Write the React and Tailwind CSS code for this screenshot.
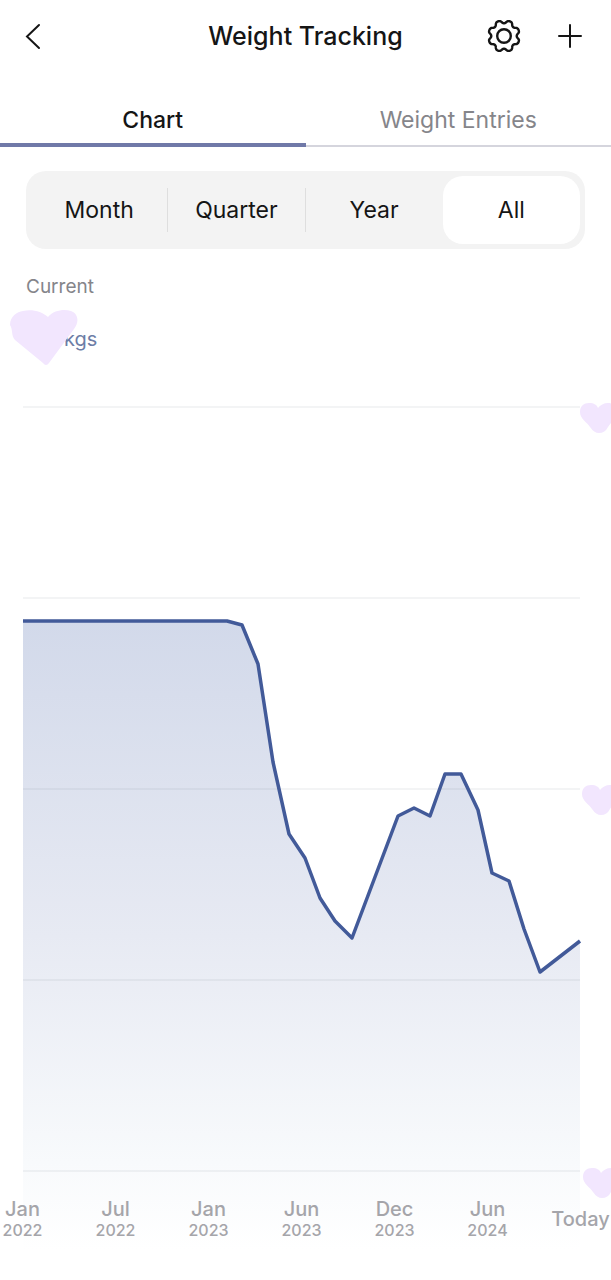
import React, { useState } from 'react';

const tabs = ['Chart', 'Weight Entries'];

const ranges = ['Month', 'Quarter', 'Year', 'All'];

const gridLines = [27, 218, 409, 600, 791];

const points = [
  [23, 241], [227, 241], [242, 245], [258, 284], [273, 382], [289, 454],
  [305, 478], [320, 518], [335, 541], [352, 558], [398, 436], [414, 428],
  [430, 436], [445, 394], [461, 394], [478, 430], [492, 493], [509, 501],
  [524, 549], [540, 592], [580, 561],
];

const hearts = [
  { x: 580, y: 22 },
  { x: 582, y: 404 },
  { x: 583, y: 787 },
];

const xLabels = [
  { top: 'Jan', bottom: '2022' },
  { top: 'Jul', bottom: '2022' },
  { top: 'Jan', bottom: '2023' },
  { top: 'Jun', bottom: '2023' },
  { top: 'Dec', bottom: '2023' },
  { top: 'Jun', bottom: '2024' },
  { top: 'Today' },
];

const linePath = 'M' + points.map((p) => p.join(' ')).join('L');
const areaPath = `${linePath}L580 870L23 870Z`;

// Eight rounded teeth, with a notch at twelve o'clock
const gearPath =
  'M' +
  Array.from({ length: 144 }, (_, i) => {
    const a = (i / 144) * Math.PI * 2;
    const wave = Math.cos(8 * a + Math.PI);
    const r = 14.1 + 1.8 * Math.tanh(1.3 * wave + 0.3);
    return `${(18 + r * Math.cos(a)).toFixed(2)} ${(18 + r * Math.sin(a)).toFixed(2)}`;
  }).join('L') +
  'Z';

const GearIcon = () => (
  <svg
    viewBox="0 0 36 36"
    className="w-9 h-9"
    fill="none"
    stroke="currentColor"
    strokeWidth="2.4"
    strokeLinejoin="round"
  >
    <path d={gearPath} />
    <circle cx="18" cy="18" r="6.8" />
  </svg>
);

const Header = () => (
  <header className="h-18 px-6 grid grid-cols-[1fr_auto_1fr] items-center">
    <button aria-label="Back" className="w-5 h-9 flex items-center">
      <svg
        viewBox="0 0 20 28"
        className="w-5 h-7"
        fill="none"
        stroke="currentColor"
        strokeWidth="2"
        strokeLinecap="round"
      >
        <path d="M15 3L3 14.5L15 26" />
      </svg>
    </button>
    <h1 className="text-[25px] leading-8 font-medium">Weight Tracking</h1>
    <div className="flex items-center justify-end gap-[35px]">
      <button aria-label="Settings">
        <GearIcon />
      </button>
      <button aria-label="Add entry" className="mr-1">
        <svg
          viewBox="0 0 26 26"
          className="w-6.5 h-6.5"
          fill="none"
          stroke="currentColor"
          strokeWidth="2"
          strokeLinecap="round"
        >
          <path d="M13 2V24M2 13H24" />
        </svg>
      </button>
    </div>
  </header>
);

const WeightChart = () => (
  <section className="grid overflow-hidden" aria-label="Weight history">
    <svg viewBox="0 0 611 900" className="col-start-1 row-start-1 w-full h-auto">
      <defs>
        <linearGradient id="area" x1="0" y1="241" x2="0" y2="870" gradientUnits="userSpaceOnUse">
          <stop offset="0" stopColor="#d2d9ea" />
          <stop offset="0.5" stopColor="#e7eaf3" />
          <stop offset="0.86" stopColor="#f8fafc" />
          <stop offset="1" stopColor="#ffffff" />
        </linearGradient>
      </defs>
      <path d={areaPath} fill="url(#area)" />
      {gridLines.map((y) => (
        <path key={y} d={`M23 ${y}H580`} stroke="#6b7280" strokeOpacity="0.08" strokeWidth="2" />
      ))}
      <path d={linePath} fill="none" stroke="#425a99" strokeWidth="3.5" strokeLinejoin="round" />
      <g fill="#f2e6fe">
        {hearts.map(({ x, y }) => (
          <path
            key={y}
            transform={`translate(${x} ${y})`}
            d="M0 10C0 4 4 1 9 1C14 1 17 3 18 6C20 3 24 1 28 1C34 1 37 5 37 10C37 16 31 20 28 25Q25 31 19 31Q14 31 10 25C7 20 0 17 0 10Z"
          />
        ))}
      </g>
    </svg>
    <ol className="col-start-1 row-start-1 self-end mb-10 -ml-6 -mr-4 grid grid-cols-7 items-center text-center font-medium text-[#a5a5aa]">
      {xLabels.map(({ top, bottom }, i) => (
        <li key={i} className="flex flex-col">
          <span className="text-[20px] leading-[22px]">{top}</span>
          {bottom && <span className="text-base leading-5">{bottom}</span>}
        </li>
      ))}
    </ol>
  </section>
);

const App = () => {
  const [tab, setTab] = useState('Chart');
  const [range, setRange] = useState('All');

  return (
    <main className="bg-white text-[#151515] font-[Inter,sans-serif] overflow-hidden">
      <Header />

      <nav className="grid grid-cols-2">
        {tabs.map((name) => (
          <button
            key={name}
            onClick={() => setTab(name)}
            className={`h-[75px] pt-6 text-[23px] leading-7 ${
              tab === name
                ? 'border-b-4 border-[#7079a8] font-medium'
                : 'pb-0.5 border-b-2 border-[#d5d5dd] text-[#85858a]'
            }`}
          >
            {name}
          </button>
        ))}
      </nav>

      <div className="mx-6.5 mt-6 p-[5px] grid grid-cols-4 rounded-[20px] bg-[#f3f3f3]">
        {ranges.map((name, i) => (
          <button
            key={name}
            onClick={() => setRange(name)}
            className={`h-17 flex items-center text-[23px] leading-7 ${
              range === name ? 'bg-white rounded-[20px]' : ''
            }`}
          >
            <span
              className={`flex-1 py-2 ${
                i < 2 ? 'border-r border-[#dedede]' : ''
              }`}
            >
              {name}
            </span>
          </button>
        ))}
      </div>

      <div className="h-[131px] pt-6 px-6.5">
        <p className="text-[19px] leading-7 text-[#85858a]">Current</p>
        <p className="relative mt-6 pl-[38px] text-xl leading-7 text-[#6d7da6]">
          kgs
          <svg viewBox="0 0 68 56" className="absolute -left-4 -top-4 w-17 h-14" fill="#f2e6fe">
            <path d="M0 16C0 7 7 3 13 2C23 0 32 3 38 8C44 1 54 0 61 2C69 5 69 14 64 20L53 35L39 54Q36 58 33 54L5 31C1 27 3 20 0 16Z" />
          </svg>
        </p>
      </div>

      <WeightChart />
    </main>
  );
};

export default App;
